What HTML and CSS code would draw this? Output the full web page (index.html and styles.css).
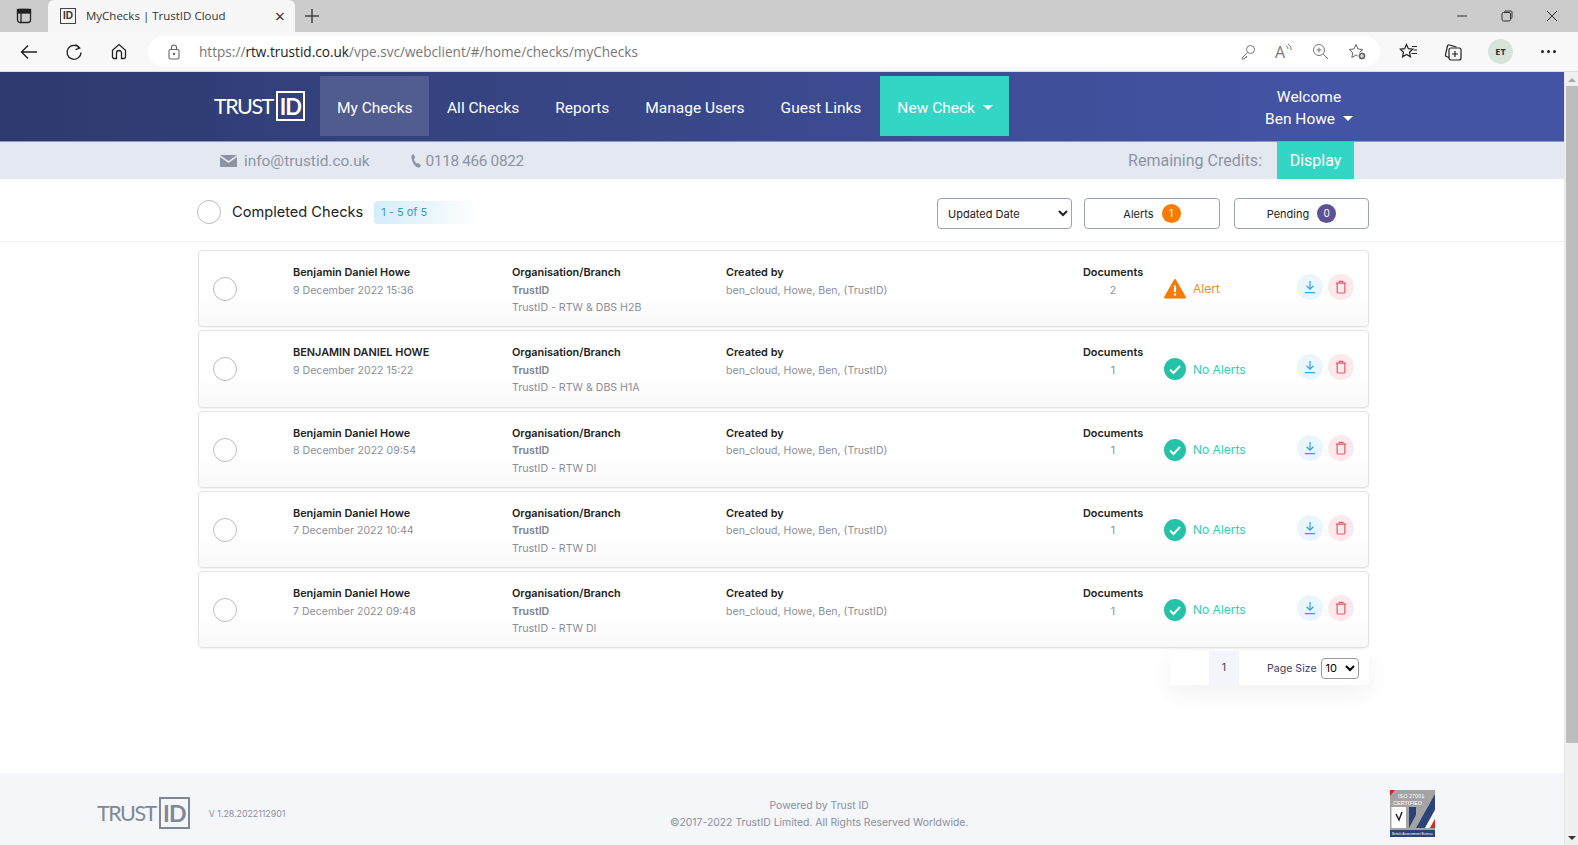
FILE: index.html
```html
<!DOCTYPE html>
<html lang="en">
<head>
    <meta charset="UTF-8">
    <title>MyChecks | TrustID Cloud</title>
    <link rel="stylesheet" href="styles.css">
</head>
<body>
    <!-- browser chrome -->
    <div class="tabstrip">
        <div class="tab-side">
            <svg width="16" height="16" viewBox="0 0 16 16" fill="none" stroke="#222" stroke-width="1.3"><rect x="1.5" y="1.5" width="13" height="13" rx="2.5"/><rect x="1.5" y="1.5" width="13" height="3.5" fill="#222"/><line x1="5" y1="5" x2="5" y2="14"/></svg>
        </div>
        <div class="tab">
            <span class="favicon">ID</span>
            <span class="tab-title">MyChecks | TrustID Cloud</span>
            <span class="tab-close">×</span>
        </div>
        <svg class="new-tab" width="14" height="14" viewBox="0 0 14 14" stroke="#222" stroke-width="1.2"><line x1="7" y1="0" x2="7" y2="14"/><line x1="0" y1="7" x2="14" y2="7"/></svg>
        <div class="window-btns">
            <svg width="12" height="12" viewBox="0 0 12 12" stroke="#333" fill="none"><line x1="1" y1="6" x2="11" y2="6"/></svg>
            <svg width="12" height="12" viewBox="0 0 12 12" stroke="#333" fill="none"><rect x="1" y="2.5" width="8.5" height="8.5" rx="1.5"/><path d="M3.5 2.5V2a1 1 0 0 1 1-1H10a1 1 0 0 1 1 1v5.5a1 1 0 0 1-1 1h-.5"/></svg>
            <svg width="12" height="12" viewBox="0 0 12 12" stroke="#333" fill="none"><line x1="1" y1="1" x2="11" y2="11"/><line x1="11" y1="1" x2="1" y2="11"/></svg>
        </div>
    </div>
    <div class="toolbar">
        <svg class="tool-back" width="18" height="16" viewBox="0 0 18 16" fill="none" stroke="#222" stroke-width="1.4"><path d="M17 8H1.5M8 1.5 1.5 8 8 14.5"/></svg>
        <svg class="tool-reload" width="17" height="18" viewBox="0 0 17 18" fill="none" stroke="#222" stroke-width="1.3"><path d="M14.5 5a7 7 0 1 0 1.5 4.5"/><path d="M10.5 1.5l4.2 3.6-4.2 1.6" /></svg>
        <svg class="tool-home" width="16" height="17" viewBox="0 0 16 17" fill="none" stroke="#222" stroke-width="1.3"><path d="M1.5 7.2 8 1.5l6.5 5.7V14a1.5 1.5 0 0 1-1.5 1.5h-2.5V10a2.5 2.5 0 0 0-5 0v5.500H3A1.500 1.500 0 0 1 1.500 14z"/></svg>
        <div class="addressbar">
            <svg width="12" height="16" viewBox="0 0 12 16" fill="none" stroke="#666" stroke-width="1.1"><rect x="1" y="5.500" width="10" height="9.500" rx="1.500"/><path d="M3.500 5.500V3.500a2.500 2.500 0 0 1 5 0v2"/><circle cx="6" cy="10" r=".7" fill="#666"/></svg>
            <span class="url">https://<b>rtw.trustid.co.uk</b>/vpe.svc/webclient/#/home/checks/myChecks</span>
            <div class="address-icons">
                <svg width="16" height="16" viewBox="0 0 16 16" fill="none" stroke="#777"><circle cx="10.500" cy="5.500" r="4"/><path d="M7.500 8.500 2 14v1h2.500l.5-1.500h1.500V12"/></svg>
                <span class="read-aloud">A<svg width="7" height="9" viewBox="0 0 7 9" fill="none" stroke="#777"><path d="M1 3a3 3 0 0 1 2 3M3 1a6 6 0 0 1 3 6"/></svg></span>
                <svg width="17" height="17" viewBox="0 0 17 17" fill="none" stroke="#777"><circle cx="7" cy="7" r="5.500"/><path d="M11 11l5 5M7 4.500v5M4.500 7h5"/></svg>
                <svg width="19" height="18" viewBox="0 0 19 18" fill="none" stroke="#666"><path d="M8 1.500l2 4.500 4.800.5-3.600 3.200 1 4.800L8 12l-4.200 2.500 1-4.800L1.200 6.500 6 6z"/><circle cx="14" cy="13" r="4" fill="#666" stroke="#fff"/><path d="M14 11v4M12 13h4" stroke="#fff"/></svg>
            </div>
        </div>
        <svg class="tool-fav" width="19" height="17" viewBox="0 0 19 17" fill="none" stroke="#222" stroke-width="1.200"><path d="M7.500 1.500l1.900 4.200 4.300.5-3.200 3 .9 4.600-3.900-2.300-3.900 2.300.9-4.600-3.200-3 4.300-.5z"/><path d="M13 3.500h5M14.500 7h3.500M12.500 10.500H18"/></svg>
        <svg class="tool-coll" width="18" height="18" viewBox="0 0 18 18" fill="none" stroke="#222" stroke-width="1.200"><rect x="5" y="5" width="12" height="12" rx="2"/><path d="M11 8v6M8 11h6M5 14.500 2.500 13.500a1.500 1.500 0 0 1-1-2L3.500 3a1.500 1.500 0 0 1 2-1l7 2"/></svg>
        <span class="profile">ET</span>
        <span class="more"><i></i><i></i><i></i></span>
    </div>

    <div class="viewport">
        <div class="page">
            <header class="nav">
                <div class="logo logo-light"><span class="logo-word">TRUST</span><span class="logo-id">ID</span></div>
                <a class="nav-item active">My Checks</a>
                <a class="nav-item">All Checks</a>
                <a class="nav-item">Reports</a>
                <a class="nav-item">Manage Users</a>
                <a class="nav-item">Guest Links</a>
                <a class="nav-item new-check">New Check <span class="caret"></span></a>
                <div class="user">
                    <div>Welcome</div>
                    <div>Ben Howe <span class="caret"></span></div>
                </div>
            </header>

            <div class="subbar">
                <svg class="mail-icon" width="17" height="12" viewBox="0 0 17 12" fill="#8c94a3"><path d="M0 0h17L8.500 6z"/><path d="M0 2v10h17V2L8.500 8z"/></svg>
                <span class="mail">info@trustid.co.uk</span>
                <svg class="phone-icon" width="10" height="14" viewBox="0 0 10 14" fill="#8c94a3"><path d="M2.500 0 4.200 3.500 3 5c.3 1.700 1.200 3.400 2.700 4.500L7.400 9 10 11.500 8.300 13.800C3.500 13 .2 7.500.5 1.500z"/></svg>
                <span class="phone">0118 466 0822</span>
                <span class="credits">Remaining Credits:</span>
                <a class="display-btn">Display</a>
            </div>

            <div class="list-head">
                <span class="check big"></span>
                <h2>Completed Checks</h2>
                <span class="count">1 - 5 of 5</span>
                <select class="sort">
                    <option>Updated Date</option>
                </select>
                <button class="filter filter-alerts">Alerts <span class="pill orange">1</span></button>
                <button class="filter filter-pending">Pending <span class="pill purple">0</span></button>
            </div>

            <main class="rows">
                <div class="row">
                    <span class="check"></span>
                    <div><b>Benjamin Daniel Howe</b><p>9 December 2022 15:36</p></div>
                    <div><b>Organisation/Branch</b><p class="org">TrustID</p><p>TrustID - RTW &amp; DBS H2B</p></div>
                    <div><b>Created by</b><p>ben_cloud, Howe, Ben, (TrustID)</p></div>
                    <div class="docs"><b>Documents</b><p>2</p></div>
                    <div class="status alert">
                        <svg width="22" height="20" viewBox="0 0 22 20"><path d="M11 1 21 18.500H1z" fill="#f57c00" stroke="#f57c00" stroke-width="2" stroke-linejoin="round"/><path d="M11 6.500v6.500M11 14.500v2" stroke="#fff" stroke-width="2.200"/></svg>
                        Alert
                    </div>
                    <div class="actions">
                        <span class="round blue"><svg width="14" height="16" viewBox="0 0 14 16" fill="none" stroke="#2ba6e8" stroke-width="1.400"><path d="M7 1v9M3 6.500 7 10.500l4-4M1 14.500h12"/></svg></span>
                        <span class="round red"><svg width="14" height="16" viewBox="0 0 14 16" fill="none" stroke="#e5596d" stroke-width="1.400"><path d="M1 3.500h12M5 3.500V1.500h4v2M2.500 3.500V14a1 1 0 0 0 1 1h7a1 1 0 0 0 1-1V3.500"/></svg></span>
                    </div>
                </div>
                <div class="row">
                    <span class="check"></span>
                    <div><b>BENJAMIN DANIEL HOWE</b><p>9 December 2022 15:22</p></div>
                    <div><b>Organisation/Branch</b><p class="org">TrustID</p><p>TrustID - RTW &amp; DBS H1A</p></div>
                    <div><b>Created by</b><p>ben_cloud, Howe, Ben, (TrustID)</p></div>
                    <div class="docs"><b>Documents</b><p>1</p></div>
                    <div class="status ok">
                        <svg width="22" height="22" viewBox="0 0 22 22"><circle cx="11" cy="11" r="11" fill="#25c2a8"/><path d="M6 11.500l3.500 3.500L16 8" fill="none" stroke="#fff" stroke-width="2"/></svg>
                        No Alerts
                    </div>
                    <div class="actions">
                        <span class="round blue"><svg width="14" height="16" viewBox="0 0 14 16" fill="none" stroke="#2ba6e8" stroke-width="1.400"><path d="M7 1v9M3 6.500 7 10.500l4-4M1 14.500h12"/></svg></span>
                        <span class="round red"><svg width="14" height="16" viewBox="0 0 14 16" fill="none" stroke="#e5596d" stroke-width="1.400"><path d="M1 3.500h12M5 3.500V1.500h4v2M2.500 3.500V14a1 1 0 0 0 1 1h7a1 1 0 0 0 1-1V3.500"/></svg></span>
                    </div>
                </div>
                <div class="row">
                    <span class="check"></span>
                    <div><b>Benjamin Daniel Howe</b><p>8 December 2022 09:54</p></div>
                    <div><b>Organisation/Branch</b><p class="org">TrustID</p><p>TrustID - RTW DI</p></div>
                    <div><b>Created by</b><p>ben_cloud, Howe, Ben, (TrustID)</p></div>
                    <div class="docs"><b>Documents</b><p>1</p></div>
                    <div class="status ok">
                        <svg width="22" height="22" viewBox="0 0 22 22"><circle cx="11" cy="11" r="11" fill="#25c2a8"/><path d="M6 11.500l3.500 3.500L16 8" fill="none" stroke="#fff" stroke-width="2"/></svg>
                        No Alerts
                    </div>
                    <div class="actions">
                        <span class="round blue"><svg width="14" height="16" viewBox="0 0 14 16" fill="none" stroke="#2ba6e8" stroke-width="1.400"><path d="M7 1v9M3 6.500 7 10.500l4-4M1 14.500h12"/></svg></span>
                        <span class="round red"><svg width="14" height="16" viewBox="0 0 14 16" fill="none" stroke="#e5596d" stroke-width="1.400"><path d="M1 3.500h12M5 3.500V1.500h4v2M2.500 3.500V14a1 1 0 0 0 1 1h7a1 1 0 0 0 1-1V3.500"/></svg></span>
                    </div>
                </div>
                <div class="row">
                    <span class="check"></span>
                    <div><b>Benjamin Daniel Howe</b><p>7 December 2022 10:44</p></div>
                    <div><b>Organisation/Branch</b><p class="org">TrustID</p><p>TrustID - RTW DI</p></div>
                    <div><b>Created by</b><p>ben_cloud, Howe, Ben, (TrustID)</p></div>
                    <div class="docs"><b>Documents</b><p>1</p></div>
                    <div class="status ok">
                        <svg width="22" height="22" viewBox="0 0 22 22"><circle cx="11" cy="11" r="11" fill="#25c2a8"/><path d="M6 11.500l3.500 3.500L16 8" fill="none" stroke="#fff" stroke-width="2"/></svg>
                        No Alerts
                    </div>
                    <div class="actions">
                        <span class="round blue"><svg width="14" height="16" viewBox="0 0 14 16" fill="none" stroke="#2ba6e8" stroke-width="1.400"><path d="M7 1v9M3 6.500 7 10.500l4-4M1 14.500h12"/></svg></span>
                        <span class="round red"><svg width="14" height="16" viewBox="0 0 14 16" fill="none" stroke="#e5596d" stroke-width="1.400"><path d="M1 3.500h12M5 3.500V1.500h4v2M2.500 3.500V14a1 1 0 0 0 1 1h7a1 1 0 0 0 1-1V3.500"/></svg></span>
                    </div>
                </div>
                <div class="row">
                    <span class="check"></span>
                    <div><b>Benjamin Daniel Howe</b><p>7 December 2022 09:48</p></div>
                    <div><b>Organisation/Branch</b><p class="org">TrustID</p><p>TrustID - RTW DI</p></div>
                    <div><b>Created by</b><p>ben_cloud, Howe, Ben, (TrustID)</p></div>
                    <div class="docs"><b>Documents</b><p>1</p></div>
                    <div class="status ok">
                        <svg width="22" height="22" viewBox="0 0 22 22"><circle cx="11" cy="11" r="11" fill="#25c2a8"/><path d="M6 11.500l3.500 3.500L16 8" fill="none" stroke="#fff" stroke-width="2"/></svg>
                        No Alerts
                    </div>
                    <div class="actions">
                        <span class="round blue"><svg width="14" height="16" viewBox="0 0 14 16" fill="none" stroke="#2ba6e8" stroke-width="1.400"><path d="M7 1v9M3 6.500 7 10.500l4-4M1 14.500h12"/></svg></span>
                        <span class="round red"><svg width="14" height="16" viewBox="0 0 14 16" fill="none" stroke="#e5596d" stroke-width="1.400"><path d="M1 3.500h12M5 3.500V1.500h4v2M2.500 3.500V14a1 1 0 0 0 1 1h7a1 1 0 0 0 1-1V3.500"/></svg></span>
                    </div>
                </div>

                <div class="pager">
                    <span class="page-num">1</span>
                    <label>Page Size</label>
                    <select class="page-size"><option>10</option></select>
                </div>
            </main>

            <footer class="footer">
                <div class="logo logo-dark"><span class="logo-word">TRUST</span><span class="logo-id">ID</span></div>
                <span class="version">V 1.28.2022112901</span>
                <div class="legal">
                    <div>Powered by Trust ID</div>
                    <div>©2017-2022 TrustID Limited. All Rights Reserved Worldwide.</div>
                </div>
                <svg class="iso" width="45" height="47" viewBox="0 0 45 47">
                    <rect width="45" height="47" fill="#a3a3a3"/>
                    <path d="M0 0h5L0 6z" fill="#d8232a"/>
                    <rect x="0" y="40" width="45" height="7" fill="#2c4379"/>
                    <path d="M45 4V20L35 38H26z" fill="#2c4379"/>
                    <path d="M45 20v9L40 38H35z" fill="#fff"/>
                    <path d="M45 29v9H40z" fill="#d8232a"/>
                    <path d="M19 17h7v8L19 38z" fill="#2c4379"/>
                    <rect x="1.500" y="17" width="14.500" height="21" fill="#fff"/>
                    <path d="M6 24l3 6 3-8" fill="none" stroke="#222" stroke-width="1.500"/>
                    <text x="8" y="8" font-size="5.500" fill="#fff" font-family="Liberation Sans">ISO 27001</text>
                    <text x="3" y="15" font-size="5.500" fill="#fff" font-family="Liberation Sans">CERTIFIED</text>
                    <text x="2" y="45" font-size="3.400" fill="#fff" font-family="Liberation Sans">British Assessment Bureau</text>
                </svg>
            </footer>
        </div>
        <div class="scrollbar">
            <span class="arrow-up"></span>
            <span class="thumb"></span>
            <span class="arrow-down"></span>
        </div>
    </div>
</body>
</html>
```

FILE: styles.css
```css
* {
    box-sizing: border-box;
}

html, body {
    margin: 0;
    height: 100%;
    overflow: hidden;
}

body {
    display: flex;
    flex-direction: column;
    font-family: 'Inter', 'Liberation Sans', sans-serif;
    background: #fff;
}

/* browser chrome */
.tabstrip {
    height: 32px;
    background: #cccccc;
    display: flex;
    align-items: center;
    flex: none;
}

.tab-side {
    width: 48px;
    display: flex;
    justify-content: center;
    align-items: center;
}

.tab {
    width: 247px;
    height: 32px;
    background: #f7f7f7;
    border-radius: 6px 6px 0 0;
    display: flex;
    align-items: center;
    padding-left: 12px;
}

.favicon {
    width: 16px;
    height: 16px;
    border: 1px solid #444;
    font: bold 10px/14px 'Liberation Sans', sans-serif;
    text-align: center;
    color: #333;
    margin-right: 10px;
}

.tab-title {
    font: 11.5px 'Open Sans', sans-serif;
    color: #333;
    flex: 1;
    margin-top: -2px;
}

.tab-close {
    font: 18px 'Open Sans', sans-serif;
    color: #333;
    margin-right: 10px;
}

.new-tab {
    margin-left: 10px;
}

.window-btns {
    margin-left: auto;
    display: flex;
    gap: 33px;
    padding-right: 20px;
    align-items: center;
}

.toolbar {
    height: 40px;
    background: #f8f8f8;
    border-bottom: 1px solid #dcdcdc;
    display: flex;
    align-items: center;
    flex: none;
    padding-left: 20px;
}

.tool-reload {
    margin-left: 27px;
}

.tool-home {
    margin-left: 29px;
}

.addressbar {
    width: 1232px;
    height: 31px;
    margin-left: 21px;
    background: #fff;
    border-radius: 16px;
    display: flex;
    align-items: center;
    padding-left: 20px;
}

.url {
    margin-left: 19px;
    font: 13.6px 'Open Sans', sans-serif;
    color: #777;
}

.url b {
    font-weight: 400;
    color: #222;
}

.address-icons {
    margin-left: auto;
    display: flex;
    align-items: center;
    gap: 19px;
    padding-right: 13px;
}

.read-aloud {
    font: 16px 'Open Sans', sans-serif;
    color: #777;
    width: 18px;
    white-space: nowrap;
}

.read-aloud svg {
    vertical-align: 6px;
}

.tool-fav {
    margin-left: 19px;
}

.tool-coll {
    margin-left: 26px;
}

.profile {
    width: 25px;
    height: 25px;
    margin-left: 26px;
    border-radius: 50%;
    background: #d6e4dc;
    color: #333;
    font: bold 9px/25px 'Open Sans', sans-serif;
    text-align: center;
}

.more {
    margin-left: 28px;
    display: flex;
    gap: 3px;
}

.more i {
    width: 3px;
    height: 3px;
    border-radius: 50%;
    background: #222;
}

/* page */
.viewport {
    flex: 1;
    display: flex;
    min-height: 0;
}

.page {
    flex: 1;
    display: flex;
    flex-direction: column;
    min-width: 0;
}

.nav {
    height: 70px;
    flex: none;
    background: linear-gradient(90deg, #2e3a6e, #4454a4 85%);
    display: flex;
    align-items: flex-start;
    padding: 4px 210px 0 214px;
    font-family: 'Roboto', sans-serif;
    font-size: 15.5px;
    color: #fff;
    border-bottom: 1px solid #8e97c2;
}

.logo {
    display: flex;
    align-items: center;
    font-family: 'Lato', sans-serif;
}

.logo-light {
    width: 106px;
    height: 60px;
    color: #fff;
}

.logo-word {
    font-size: 21.5px;
    letter-spacing: -1.5px;
    font-weight: 400;
}

.logo-id {
    margin-left: 3px;
    width: 29px;
    height: 30px;
    border: 2px solid currentColor;
    display: flex;
    align-items: center;
    justify-content: center;
    font-size: 22px;
    font-weight: 700;
    letter-spacing: -1px;
}

.nav-item {
    height: 60px;
    line-height: 65px;
    padding: 0 18px;
    color: #fff;
    white-space: nowrap;
}

.nav-item.active {
    background: rgba(255, 255, 255, 0.14);
    width: 109px;
    padding: 0 0 0 17px;
}

.new-check {
    background: #33d6c4;
    width: 129px;
    margin-left: 1px;
    padding-left: 17px;
}

.caret {
    display: inline-block;
    margin-left: 4px;
    vertical-align: 3px;
    border-top: 5px solid #fff;
    border-left: 5px solid transparent;
    border-right: 5px solid transparent;
}

.user {
    margin-left: auto;
    width: 90px;
    margin-top: 10px;
    text-align: center;
    white-space: nowrap;
    line-height: 22px;
}

.subbar {
    height: 37px;
    flex: none;
    background: #e4e8f0;
    display: flex;
    align-items: center;
    padding: 0 210px 0 220px;
    font-family: 'Roboto', sans-serif;
    font-size: 16px;
    color: #8c94a3;
}

.mail-icon {
    margin-right: 7px;
}

.mail {
    font-size: 15.4px;
}

.phone-icon {
    margin-left: 41px;
    margin-right: 5px;
}

.phone {
    font-size: 15.4px;
    letter-spacing: -0.35px;
}

.credits {
    margin-left: auto;
    margin-right: 15px;
}

.display-btn {
    width: 77px;
    height: 37px;
    line-height: 37px;
    text-align: center;
    background: #33d6c4;
    color: #fff;
}

.list-head {
    height: 63px;
    flex: none;
    border-bottom: 1px solid #eeeeee;
    display: flex;
    align-items: center;
    padding: 4px 195px 0 197px;
}

.check {
    display: block;
    width: 24px;
    height: 24px;
    border-radius: 50%;
    border: 1.5px solid #b9bcc2;
    background: #fff;
}

.list-head h2 {
    margin: 0 0 0 11px;
    font-size: 14.6px;
    font-weight: 400;
    color: #222;
}

.count {
    margin-left: 11px;
    width: 106px;
    height: 23px;
    line-height: 23px;
    padding-left: 7px;
    font-size: 11px;
    color: #3f97c0;
    border-radius: 4px 0 0 4px;
    background: linear-gradient(90deg, #d3edf9, #fff);
}

.sort {
    margin-left: auto;
    margin-top: 3px;
    width: 135px;
    height: 31px;
    padding-left: 6px;
    font: 11px 'Inter', sans-serif;
    color: #222;
    background: #fff;
    border: 1px solid #9aa3b2;
    border-radius: 4px;
}

.filter {
    height: 31px;
    width: 136px;
    margin: 3px 0 0 12px;
    background: #fff;
    border: 1px solid #9aa3b2;
    border-radius: 4px;
    font: 11px 'Inter', sans-serif;
    color: #222;
    display: flex;
    align-items: center;
    justify-content: center;
    gap: 8px;
}

.filter-pending {
    width: 135px;
    margin-left: 14px;
}

.pill {
    width: 19px;
    height: 19px;
    line-height: 19px;
    border-radius: 50%;
    color: #fff;
    text-align: center;
    font-size: 10px;
}

.orange {
    background: #f57c00;
}

.purple {
    background: #5e5297;
}

.rows {
    flex: 1;
    padding: 8px 195px 0 198px;
    display: flex;
    flex-direction: column;
    gap: 3px;
}

.row {
    height: 77.25px;
    flex: none;
    display: grid;
    grid-template-columns: 80px 219px 214px 357px 60px 154px 1fr;
    padding: 13px 0 0 14px;
    background: linear-gradient(180deg, #fff 55%, #f9f9f9);
    border: 1px solid #e2e2e2;
    border-radius: 4px;
    box-shadow: 0 1px 2px rgba(0, 0, 0, 0.06);
    font-size: 10.6px;
    line-height: 17.5px;
    color: #8c8f99;
}

.row > div:nth-child(6) {
    margin-left: 21px;
}

.row .check {
    margin-top: 13px;
}

.row b {
    font-size: 10.9px;
    font-weight: 600;
    color: #222;
    white-space: nowrap;
}

.row p {
    margin: 0;
    white-space: nowrap;
}

.row .org {
    font-weight: 600;
    color: #7d8290;
}

.docs {
    text-align: center;
}

.status {
    display: flex;
    align-items: center;
    gap: 7px;
    height: 22px;
    margin-top: 14px;
    font-size: 12px;
}

.status.alert {
    color: #f58a1f;
}

.status.ok {
    color: #33cdb9;
}

.actions {
    display: flex;
    gap: 5px;
    margin-top: 10px;
}

.round {
    width: 26px;
    height: 26px;
    border-radius: 50%;
    display: flex;
    align-items: center;
    justify-content: center;
}

.round svg {
    width: 12px;
    height: 14px;
}

.blue {
    background: #e9f6fd;
}

.red {
    background: #fce9ec;
}

.pager {
    align-self: flex-end;
    width: 199px;
    height: 34px;
    background: #fff;
    border-radius: 4px;
    box-shadow: 0 8px 24px rgba(0, 0, 0, 0.06);
    display: flex;
    align-items: center;
    padding-left: 39px;
    font-size: 10.6px;
    color: #3d4254;
}

.page-num {
    width: 30px;
    height: 34px;
    line-height: 34px;
    text-align: center;
    background: #f4f5fa;
}

.pager label {
    margin-left: 28px;
}

.page-size {
    margin-left: 4px;
    width: 38px;
    height: 21px;
    font: 11px 'Inter', sans-serif;
    background: #fff;
    border: 1px solid #999;
    border-radius: 4px;
}

.footer {
    height: 72px;
    flex: none;
    background: #f4f6fa;
    display: flex;
    align-items: center;
    padding: 8px 129px 0 97px;
    color: #8a8f9b;
    font-size: 10.4px;
}

.logo-dark {
    color: #7f8894;
}

.logo-dark .logo-id {
    width: 31px;
    height: 32px;
    font-size: 23px;
}

.version {
    margin-left: 19px;
    font-size: 8.8px;
}

.legal {
    flex: 1;
    text-align: center;
    line-height: 17px;
    margin-right: 37px;
    padding-top: 2px;
}

.scrollbar {
    width: 14px;
    flex: none;
    background: #f0f0f0;
    border-left: 1px solid #e6e6e6;
    display: flex;
    flex-direction: column;
    align-items: center;
}

.arrow-up {
    margin-top: 6px;
    border-bottom: 4px solid #a8a8a8;
    border-left: 4px solid transparent;
    border-right: 4px solid transparent;
}

.thumb {
    width: 12px;
    height: 657px;
    margin-top: 4px;
    background: #bdbdbd;
}

.arrow-down {
    margin-top: auto;
    margin-bottom: 5px;
    border-top: 4px solid #333;
    border-left: 4px solid transparent;
    border-right: 4px solid transparent;
}
```
